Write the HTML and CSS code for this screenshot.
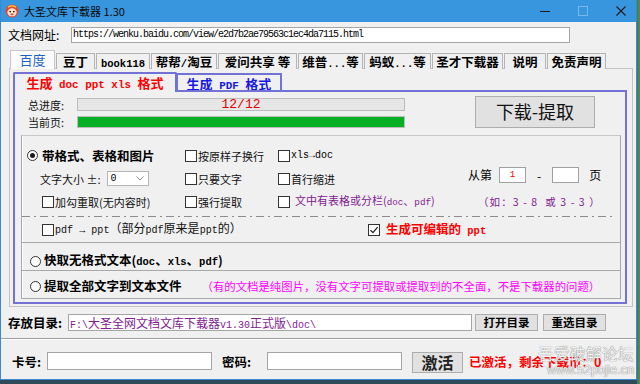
FILE: index.html
```html
<!DOCTYPE html>
<html lang="zh-CN">
<head>
<meta charset="utf-8">
<title>大圣文库下载器 1.30</title>
<link rel="stylesheet" href="styles.css">
</head>
<body>
<div class="window">
  <div class="titlebar">
    <svg class="app-icon" viewBox="0 0 14 14" width="14" height="14">
      <circle cx="7" cy="7" r="6.5" fill="#e8452a"/>
      <ellipse cx="7" cy="8.3" rx="4.6" ry="4" fill="#ffe3cf"/>
      <circle cx="5.2" cy="7.6" r="0.9" fill="#3a1a10"/>
      <circle cx="8.8" cy="7.6" r="0.9" fill="#3a1a10"/>
      <ellipse cx="7" cy="10.4" rx="1.6" ry="0.8" fill="#d8402a"/>
      <path d="M3 3.2 Q7 0.6 11 3.2" stroke="#ffcf3a" stroke-width="1.2" fill="none"/>
    </svg>
    <span class="title">大圣文库下载器 1.30</span>
    <div class="controls">
      <span class="ctl"><svg width="10" height="10" viewBox="0 0 10 10"><path d="M0 5.5H10" stroke="#1a1a1a" stroke-width="1"/></svg></span>
      <span class="ctl"><svg width="10" height="10" viewBox="0 0 10 10"><rect x="0.5" y="0.5" width="9" height="9" fill="none" stroke="#79b6ea" stroke-width="1"/></svg></span>
      <span class="ctl"><svg width="10" height="10" viewBox="0 0 10 10"><path d="M0.5 0.5L9.5 9.5M9.5 0.5L0.5 9.5" stroke="#1a1a1a" stroke-width="1.1"/></svg></span>
    </div>
  </div>

  <div class="url-row">
    <span class="url-lbl">文档网址:</span>
    <div class="field url">https://wenku.baidu.com/view/e2d7b2ae79563c1ec4da7115.html</div>
  </div>

  <div class="tabs">
    <div class="tab active">百度</div>
    <div class="tab">豆丁</div>
    <div class="tab"><span class="m">book118</span></div>
    <div class="tab">帮帮<span class="m">/</span>淘豆</div>
    <div class="tab">爱问共享 等</div>
    <div class="tab">维普<span class="m">...</span>等</div>
    <div class="tab">蚂蚁<span class="m">...</span>等</div>
    <div class="tab">圣才下载器</div>
    <div class="tab">说明</div>
    <div class="tab">免责声明</div>
  </div>

  <div class="panel">
    <div class="subtabs">
      <div class="subtab active">生成<span class="m"> doc ppt xls </span>格式</div>
      <div class="subtab pdf">生成<span class="m"> PDF </span>格式</div>
    </div>
    <div class="frame">
      <div class="progress-area">
        <div class="bars">
          <span class="plabel">总进度:</span>
          <div class="bar total">12/12</div>
          <span class="plabel">当前页:</span>
          <div class="bar current"></div>
        </div>
        <div class="big-btn">下载-提取</div>
      </div>

      <div class="group g1">
        <div class="opt-grid">
          <div class="item radio-item first"><span class="radio on"></span><span class="big">带格式、表格和图片</span></div>
          <div class="item"><span class="cb"></span><span class="small">按原样子换行</span></div>
          <div class="item"><span class="cb"></span><span class="tiny-m">xls→doc</span></div>
          <div></div>

          <div class="item size-ctl"><span class="small">文字大小 ±:</span><span class="select"><span class="sel-val">0</span><svg width="8" height="5" viewBox="0 0 8 5"><path d="M0.5 0.5L4 4L7.5 0.5" stroke="#8a8a8a" fill="none"/></svg></span></div>
          <div class="item"><span class="cb"></span><span class="small">只要文字</span></div>
          <div class="item"><span class="cb"></span><span class="small">首行缩进</span></div>
          <div class="item range"><span class="range-lbl">从第</span><span class="pg red">1</span><span class="dash-ch">-</span><span class="pg"></span><span class="range-lbl">页</span></div>

          <div class="item indent"><span class="cb"></span><span class="small">加勾重取(无内容时)</span></div>
          <div class="item"><span class="cb"></span><span class="small">强行提取</span></div>
          <div class="item"><span class="cb"></span><span class="small purple gap">文中有表格或分栏(<span class="m">doc</span>、<span class="m">pdf</span>)</span></div>
          <div class="item hint">（如：3 - 8&nbsp;&nbsp;或 3 - 3 ）</div>
        </div>
        <div class="dashline"></div>
        <div class="row4">
          <div class="item pdfppt"><span class="cb"></span><span class="mid"><span class="m">pdf → ppt</span>（部分<span class="m">pdf</span>原来是<span class="m">ppt</span>的）</span></div>
          <div class="item"><span class="cb checked"><svg width="10" height="10" viewBox="0 0 10 10"><path d="M1.5 5.2L4 7.6L8.6 2.2" stroke="#222" stroke-width="1.3" fill="none"/></svg></span><span class="red-bold">生成可编辑的<span class="m"> ppt</span></span></div>
        </div>
      </div>

      <div class="group g2">
        <div class="item radio-item"><span class="radio"></span><span class="big">快取无格式文本(<span class="m">doc</span>、<span class="m">xls</span>、<span class="m">pdf</span>)</span></div>
      </div>
      <div class="group g3">
        <div class="item radio-item"><span class="radio"></span><span class="big">提取全部文字到文本文件</span><span class="note">（有的文档是纯图片，没有文字可提取或提取到的不全面，不是下载器的问题）</span></div>
      </div>
    </div>
  </div>

  <div class="dir-row">
    <span class="dir-lbl">存放目录:</span>
    <div class="field dir"><span class="m">F:\</span>大圣全网文档文库下载器<span class="m">v1.30</span>正式版<span class="m">\doc\</span></div>
    <div class="sbtn">打开目录</div>
    <div class="sbtn">重选目录</div>
  </div>

  <div class="sep"></div>

  <div class="act-row">
    <span class="card-lbl">卡号:</span>
    <div class="field card"></div>
    <span class="pwd-lbl">密码:</span>
    <div class="field pwd"></div>
    <div class="act-btn">激活</div>
    <span class="status">已激活，剩余下载币：0</span>
  </div>

  <div class="watermark">
    <div class="wm-cn">吾爱破解论坛</div>
    <div class="wm-en">www.52pojie.cn</div>
  </div>
</div>
</body>
</html>
```

FILE: styles.css
```css
* { box-sizing: border-box; margin: 0; padding: 0; }
html, body { width: 640px; height: 384px; overflow: hidden; }
body {
  background: linear-gradient(90deg, #2f4b5a 0, #2f4b5a 637px, #3f7a5e 637px, #5b8a4e 640px);
  font-family: "Noto Sans CJK SC", "Liberation Sans", sans-serif;
  color: #000;
}
.m { font-family: "Liberation Mono", monospace; font-size: 0.84em; }

.window {
  width: 637px; height: 380px;
  background: #f0f0f0;
  border: 1px solid #3a88d4; border-top: none;
  display: flex; flex-direction: column;
  position: relative; overflow: hidden;
}

/* title bar */
.titlebar { height: 22px; flex: none; background: #3896df; display: flex; align-items: center; }
.app-icon { margin-left: 4px; flex: none; }
.title { margin-left: 5px; font-size: 11px; line-height: 22px; color: #0a0a0a; }
.controls { margin-left: auto; margin-right: -4px; display: flex; height: 22px; }
.ctl { width: 38px; height: 22px; display: flex; align-items: center; justify-content: center; }

/* url row */
.url-row { display: flex; align-items: center; height: 16px; margin-top: 5px; flex: none; }
.url-lbl { margin-left: 7px; width: 63px; font-size: 12px; line-height: 16px; }
.field { background: #fff; border: 1px solid #a5a5a5; flex: none; }
.url {
  width: 499px; height: 16px; padding-left: 1px;
  font-family: "Liberation Mono", monospace; font-size: 10px; letter-spacing: -1px;
  line-height: 14px; white-space: nowrap; overflow: hidden;
}

/* tabs */
.tabs { display: flex; align-items: flex-end; height: 19px; margin: 7px 0 -1px 9px; flex: none; position: relative; z-index: 2; }
.tab {
  height: 16px; margin-right: 1px;
  border: 1px solid #b4b4b4; border-bottom: none; background: #f0f0f0;
  font-size: 12.5px; font-weight: bold; line-height: 15px; text-align: center; white-space: nowrap;
}
.tab.active { height: 19px; background: #fbfbfb; color: #1d63c4; font-weight: normal; font-size: 13px; line-height: 17px; border-color: #c6c6c6; }
.tab:nth-child(1) { width: 45px; }
.tab:nth-child(2) { width: 39px; }
.tab:nth-child(3) { width: 54px; }
.tab:nth-child(4) { width: 66px; }
.tab:nth-child(5) { width: 79px; }
.tab:nth-child(6) { width: 65px; }
.tab:nth-child(7) { width: 67px; }
.tab:nth-child(8) { width: 71px; }
.tab:nth-child(9) { width: 42px; }
.tab:nth-child(10) { width: 59px; }

/* panel */
.panel {
  margin-left: 8px; width: 624px; height: 239px; flex: none;
  border: 1px solid #c4c4c4; background: #f0f0f0;
  padding: 3px 5px 0 3px;
  display: flex; flex-direction: column;
}
.subtabs { display: flex; align-items: flex-end; height: 18px; flex: none; }
.subtab {
  border: 2px solid #7272d6; border-bottom: none;
  font-size: 13px; font-weight: bold; line-height: 15px; text-align: center; white-space: nowrap;
}
.subtab.active {
  width: 164px; height: 20px; margin-bottom: -2px;
  background: #f0f0f0; color: #ff0000; position: relative; z-index: 1;
  border-radius: 2px 2px 0 0; padding-top: 1px;
}
.subtab.pdf { width: 105px; height: 17px; color: #1818e6; border-left-width: 1px; padding-top: 1px; }

.frame { width: 614px; height: 214px; flex: none; border: 2px solid #7272d6; display: flex; flex-direction: column; }

.progress-area { display: flex; align-items: flex-start; padding: 4px 0 0 13px; flex: none; }
.bars { display: grid; grid-template-columns: 49px 328px; row-gap: 5px; margin-top: 2px; align-items: center; }
.plabel { font-size: 11px; line-height: 12px; color: #111; }
.bar { height: 13px; border: 1px solid #bcbcbc; background: #e6e6e6; }
.bar.total {
  color: #e00000; text-align: center;
  font-family: "Liberation Mono", monospace; font-size: 13px; line-height: 11px;
}
.bar.current { height: 12px; background: #06b025; }
.big-btn {
  margin-left: 70px; width: 120px; height: 32px;
  background: #e1e1e1; border: 1px solid #adadad;
  font-size: 18px; line-height: 29px; text-align: center; color: #111;
}

/* option groups */
.group { margin: 0 4px 0 6px; border: 1px solid #a8a8a8; border-top: none; box-shadow: inset 1px 0 0 #fff; }
.g1 { margin-top: 7px; border-top: 1px solid #c8c8c8; padding-top: 8px; height: 108px; }
.g2 { height: 28px; padding: 9px 0 0 8px; }
.g3 { height: 28px; padding: 7px 0 0 8px; }

.opt-grid { display: grid; grid-template-columns: 158px 93px 190px 1fr; grid-auto-rows: 23px; padding-left: 5px; }
.item { display: flex; align-items: center; white-space: nowrap; }
.radio-item .radio { margin-right: 3px; }
.first .radio { margin-right: 4px; }
.radio {
  width: 11px; height: 11px; flex: none;
  border: 1px solid #333; border-radius: 50%; background: #fff;
  display: flex; align-items: center; justify-content: center;
}
.radio.on::after { content: ""; width: 5px; height: 5px; border-radius: 50%; background: #1a1a1a; }
.cb { width: 12px; height: 12px; flex: none; border: 1px solid #333; background: #fff; margin-right: 1px; display: flex; align-items: center; justify-content: center; }
.big { font-size: 12.5px; font-weight: bold; line-height: 16px; }
.small { font-size: 11px; line-height: 14px; color: #111; }
.mid { font-size: 12px; line-height: 14px; color: #111; }
.tiny-m { font-family: "Liberation Mono", monospace; font-size: 10px; line-height: 12px; }
.purple { color: #802090; }
.gap { margin-left: 4px; }

.size-ctl { padding-left: 13px; }
.select {
  margin-left: 6px; width: 42px; height: 15px;
  background: #fff; border: 1px solid #b5b5b5;
  display: flex; align-items: center; justify-content: space-between; padding: 0 4px 0 3px;
}
.sel-val { font-family: "Liberation Mono", monospace; font-size: 10px; }

.range { margin-bottom: 7px; }
.range-lbl { font-size: 12px; line-height: 16px; }
.pg { width: 27px; height: 16px; margin-left: 7px; background: #fff; border: 1px solid #a0a0a0; font-size: 9px; line-height: 14px; text-align: center; font-family: "Liberation Mono", monospace; }
.pg.red { color: #ff0000; }
.dash-ch { margin-left: 11px; margin-right: 4px; font-size: 12px; }
.pg + .range-lbl { margin-left: 10px; }

.indent { padding-left: 15px; }
.hint { padding-left: 10px; color: #802090; font-size: 10.5px; letter-spacing: 1.1px; }

.dashline {
  height: 1px; margin: 3px 7px 0 0;
  background: repeating-linear-gradient(90deg, #8c8c8c 0 8px, transparent 8px 12px, #8c8c8c 12px 14px, transparent 14px 18px);
}
.row4 { display: flex; align-items: center; height: 25px; padding-left: 20px; }
.pdfppt { width: 326px; }
.red-bold { margin-left: 5px; color: #ff0000; font-weight: bold; font-size: 12.5px; line-height: 16px; }

.note { margin-left: 20px; color: #ff00ff; font-size: 11.4px; line-height: 16px; }

/* directory row */
.dir-row { display: flex; align-items: center; height: 17px; margin-top: 7px; flex: none; }
.dir-lbl { margin-left: 7px; width: 60px; font-size: 12.5px; font-weight: bold; line-height: 17px; }
.dir { width: 404px; height: 17px; padding-left: 1px; color: #802090; font-size: 12px; line-height: 15px; white-space: nowrap; overflow: hidden; }
.dir .m { font-size: 10px; }
.sbtn {
  width: 63px; height: 17px; margin-left: 3px;
  background: #e1e1e1; border: 1px solid #adadad;
  font-size: 11.5px; font-weight: bold; line-height: 15px; text-align: center;
}
.sbtn + .sbtn { margin-left: 5px; }

.sep { height: 2px; margin-top: 7px; border-top: 1px solid #a0a0a0; border-bottom: 1px solid #fff; flex: none; }

/* activation row */
.act-row { display: flex; align-items: flex-start; height: 21px; margin-top: 12px; flex: none; }
.card-lbl, .pwd-lbl { font-size: 12.5px; font-weight: bold; line-height: 20px; }
.card-lbl { margin-left: 11px; width: 35px; }
.pwd-lbl { margin-left: 10px; width: 45px; }
.card { width: 165px; height: 18px; }
.pwd { width: 135px; height: 18px; }
.act-btn {
  margin-left: 10px; width: 51px; height: 21px;
  background: #e1e1e1; border: 1px solid #adadad;
  font-size: 16px; font-weight: bold; line-height: 18px; text-align: center; color: #222;
}
.status { margin-left: 6px; color: #ff0000; font-size: 12.5px; font-weight: bold; line-height: 20px; white-space: nowrap; }

/* overlay watermark */
.watermark { position: absolute; right: 2px; bottom: 1px; text-align: right; color: rgba(255,255,255,0.88); text-shadow: 0 0 1px #8a8a8a, 0 0 1px #8a8a8a; pointer-events: none; }
.wm-cn { font-size: 15.5px; line-height: 19px; letter-spacing: 0.5px; }
.wm-en { font-family: "Liberation Sans", sans-serif; font-size: 12.5px; line-height: 15px; }
```
